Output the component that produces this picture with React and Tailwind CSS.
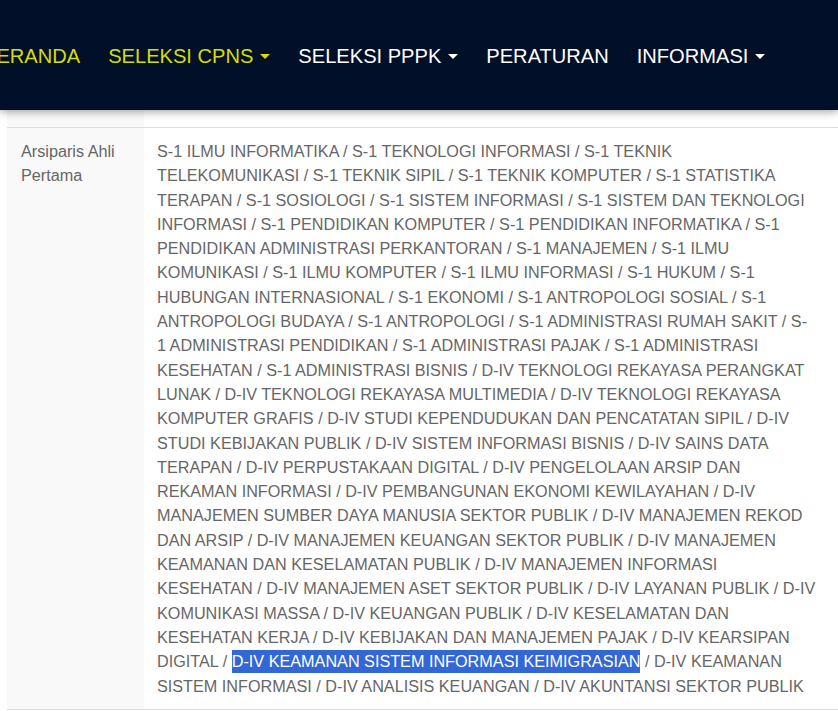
import React from "react";

const Caret = () => (
  <span className="ml-[7px] inline-block h-0 w-0 border-x-[5px] border-t-[5px] border-x-transparent border-t-current align-[4px]" />
);

const items = [
  { label: "BERANDA", active: true, caret: false },
  { label: "SELEKSI CPNS", active: true, caret: true },
  { label: "SELEKSI PPPK", active: false, caret: true },
  { label: "PERATURAN", active: false, caret: false },
  { label: "INFORMASI", active: false, caret: true },
];

const lines = [
  "S-1 ILMU INFORMATIKA / S-1 TEKNOLOGI INFORMASI / S-1 TEKNIK",
  "TELEKOMUNIKASI / S-1 TEKNIK SIPIL / S-1 TEKNIK KOMPUTER / S-1 STATISTIKA",
  "TERAPAN / S-1 SOSIOLOGI / S-1 SISTEM INFORMASI / S-1 SISTEM DAN TEKNOLOGI",
  "INFORMASI / S-1 PENDIDIKAN KOMPUTER / S-1 PENDIDIKAN INFORMATIKA / S-1",
  "PENDIDIKAN ADMINISTRASI PERKANTORAN / S-1 MANAJEMEN / S-1 ILMU",
  "KOMUNIKASI / S-1 ILMU KOMPUTER / S-1 ILMU INFORMASI / S-1 HUKUM / S-1",
  "HUBUNGAN INTERNASIONAL / S-1 EKONOMI / S-1 ANTROPOLOGI SOSIAL / S-1",
  "ANTROPOLOGI BUDAYA / S-1 ANTROPOLOGI / S-1 ADMINISTRASI RUMAH SAKIT / S-",
  "1 ADMINISTRASI PENDIDIKAN / S-1 ADMINISTRASI PAJAK / S-1 ADMINISTRASI",
  "KESEHATAN / S-1 ADMINISTRASI BISNIS / D-IV TEKNOLOGI REKAYASA PERANGKAT",
  "LUNAK / D-IV TEKNOLOGI REKAYASA MULTIMEDIA / D-IV TEKNOLOGI REKAYASA",
  "KOMPUTER GRAFIS / D-IV STUDI KEPENDUDUKAN DAN PENCATATAN SIPIL / D-IV",
  "STUDI KEBIJAKAN PUBLIK / D-IV SISTEM INFORMASI BISNIS / D-IV SAINS DATA",
  "TERAPAN / D-IV PERPUSTAKAAN DIGITAL / D-IV PENGELOLAAN ARSIP DAN",
  "REKAMAN INFORMASI / D-IV PEMBANGUNAN EKONOMI KEWILAYAHAN / D-IV",
  "MANAJEMEN SUMBER DAYA MANUSIA SEKTOR PUBLIK / D-IV MANAJEMEN REKOD",
  "DAN ARSIP / D-IV MANAJEMEN KEUANGAN SEKTOR PUBLIK / D-IV MANAJEMEN",
  "KEAMANAN DAN KESELAMATAN PUBLIK / D-IV MANAJEMEN INFORMASI",
  "KESEHATAN / D-IV MANAJEMEN ASET SEKTOR PUBLIK / D-IV LAYANAN PUBLIK / D-IV",
  "KOMUNIKASI MASSA / D-IV KEUANGAN PUBLIK / D-IV KESELAMATAN DAN",
  "KESEHATAN KERJA / D-IV KEBIJAKAN DAN MANAJEMEN PAJAK / D-IV KEARSIPAN",
];

export default function App() {
  return (
    <div className="min-h-[711px] w-[838px] overflow-hidden bg-white font-['Liberation_Sans',Arial,sans-serif]">
      <nav className="relative z-10 flex h-[110px] items-center bg-[#010f29] pt-[2px] shadow-[0_2px_8px_rgba(0,0,0,0.35)]">
        <ul className="ml-[-17px] flex items-center gap-[28px] text-[20.1px] leading-[24px]">
          {items.map((it) => (
            <li
              key={it.label}
              className={`whitespace-nowrap ${it.active ? "text-[#d5de00]" : "text-white"}`}
            >
              {it.label}
              {it.caret && <Caret />}
            </li>
          ))}
        </ul>
      </nav>
      <div className="ml-[7px] text-[16.22px] leading-[24.3px] text-[#666666]">
        <div className="flex h-[18px] border-b border-[#dddddd]">
          <div className="w-[137px] shrink-0 bg-[#f9f9f9]" />
          <div className="flex-1 bg-white" />
        </div>
        <div className="flex border-b border-[#dddddd]">
          <div className="w-[137px] shrink-0 bg-[#f9f9f9] py-[11px] pl-[14px] pr-[10px]">
            Arsiparis Ahli Pertama
          </div>
          <div className="flex-1 whitespace-nowrap bg-white py-[11px] pl-[13px]">
            {lines.map((l) => (
              <React.Fragment key={l}>
                {l}
                <br />
              </React.Fragment>
            ))}
            DIGITAL /{" "}
            <span className="bg-[#3367d6] py-[2.4px] text-white">
              D-IV KEAMANAN SISTEM INFORMASI KEIMIGRASIAN
            </span>{" "}
            / D-IV KEAMANAN
            <br />
            SISTEM INFORMASI / D-IV ANALISIS KEUANGAN / D-IV AKUNTANSI SEKTOR PUBLIK
          </div>
        </div>
      </div>
    </div>
  );
}
